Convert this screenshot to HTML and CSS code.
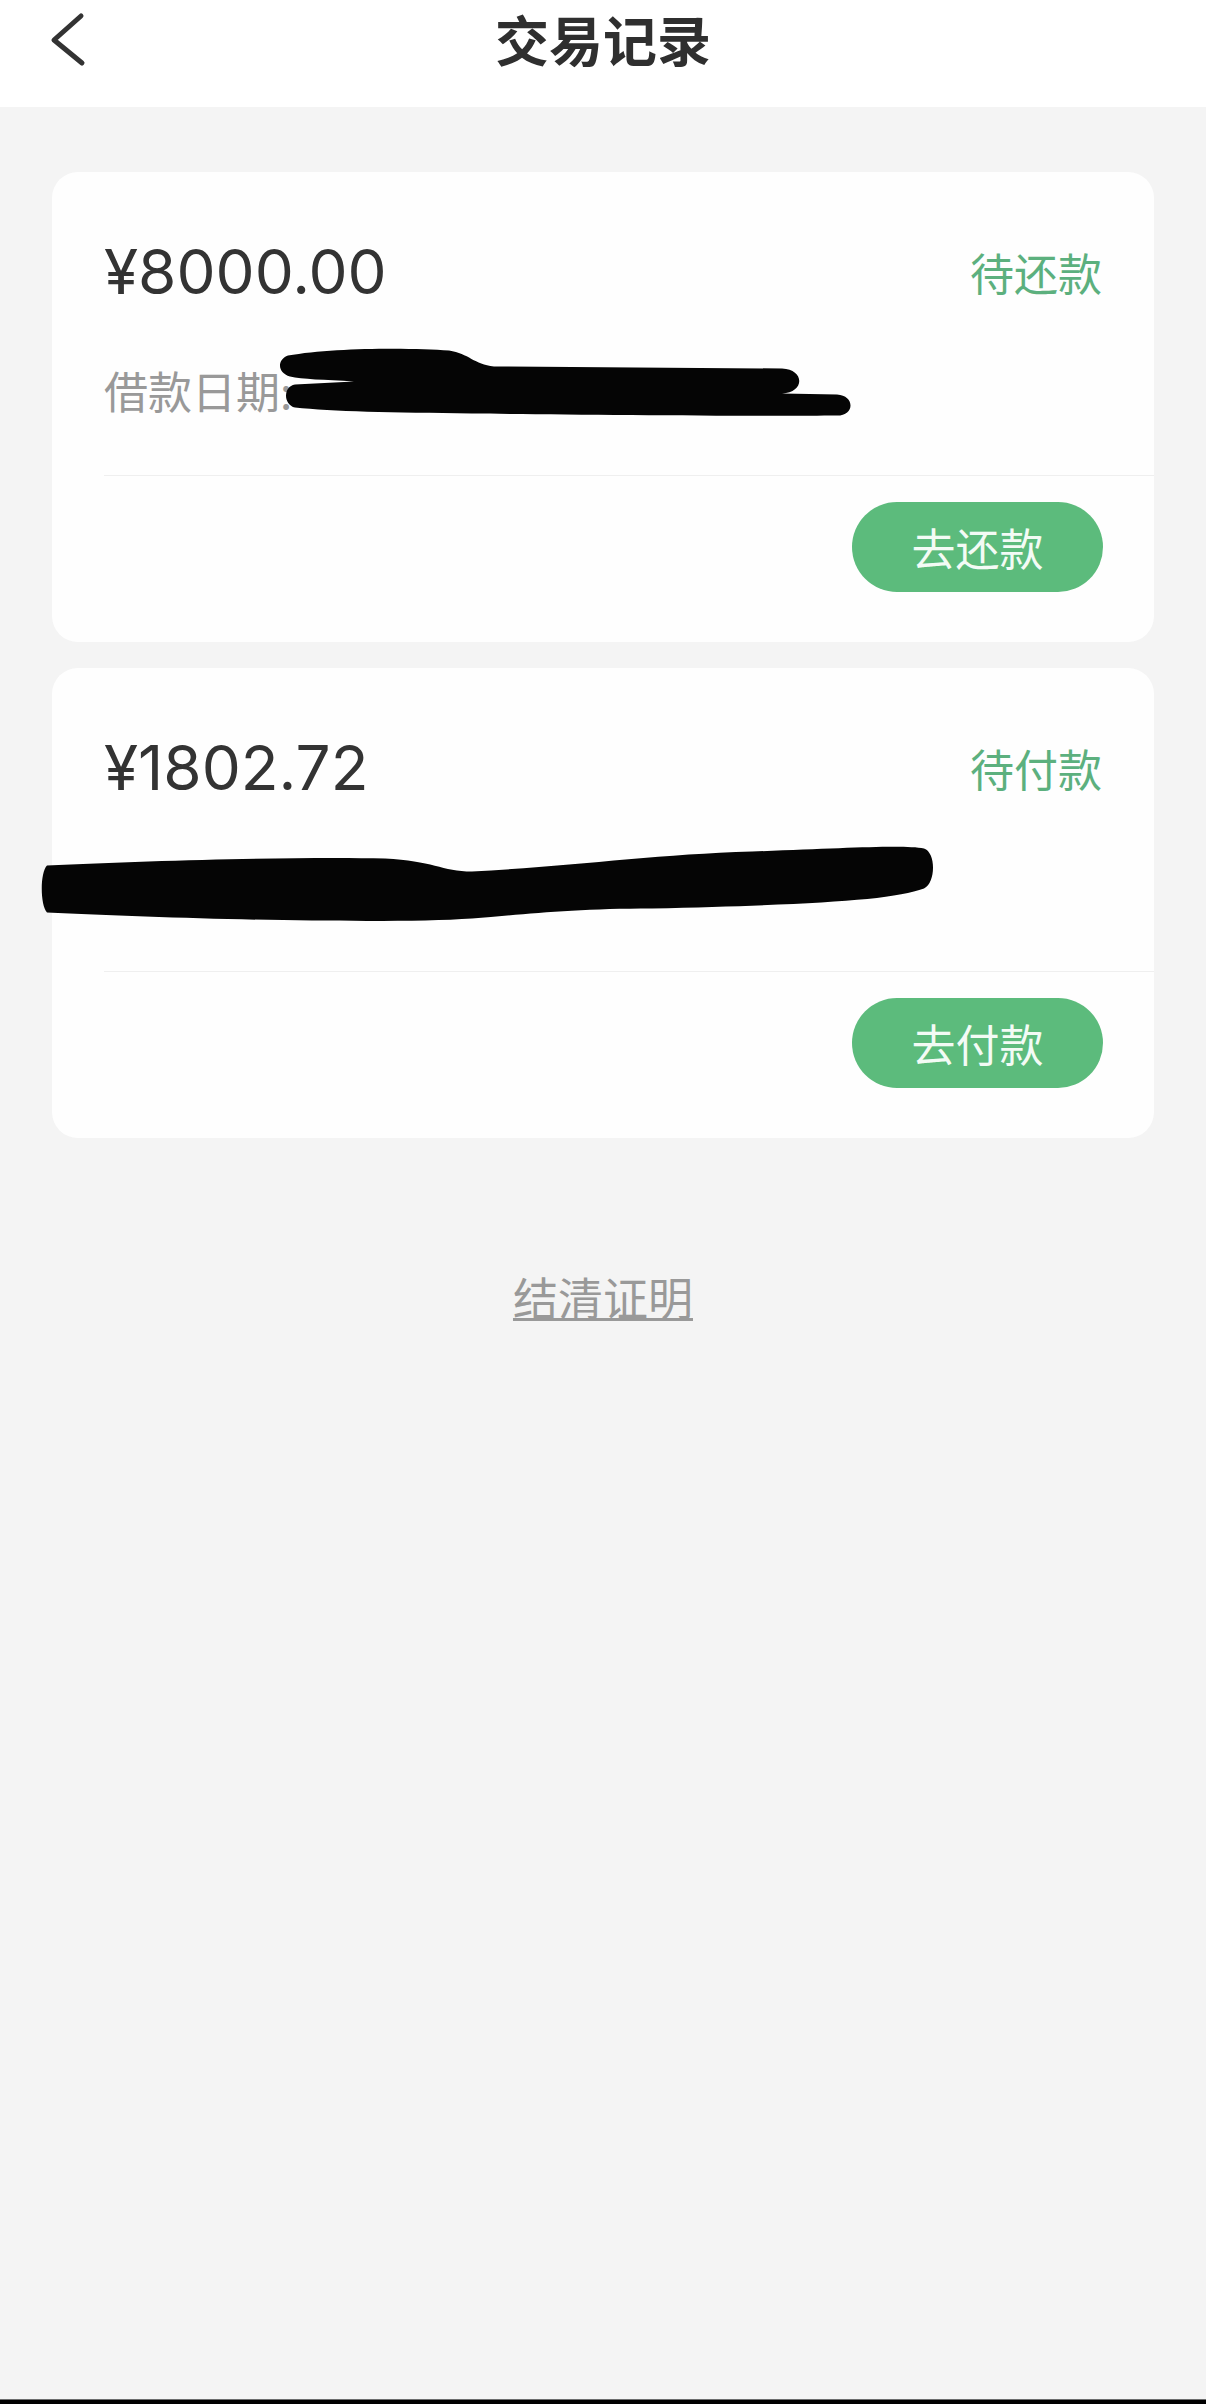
FILE: index.html
```html
<!DOCTYPE html>
<html lang="zh-CN">
<head>
    <meta charset="UTF-8">
    <meta name="viewport" content="width=device-width, initial-scale=1.0">
    <title>交易记录</title>
    <link rel="stylesheet" href="styles.css">
</head>
<body>
    <header class="nav">
        <a class="nav-back" href="#">
            <svg width="40" height="56" viewBox="0 0 40 56">
                <polyline points="33,5 6,29 34,52" fill="none" stroke="#333" stroke-width="5" stroke-linecap="round" stroke-linejoin="round"/>
            </svg>
        </a>
        <h1 class="nav-title">交易记录</h1>
        <span></span>
    </header>

    <main class="records">
        <section class="record-card">
            <div class="record-main">
                <div class="record-head">
                    <span class="record-amount">¥8000.00</span>
                    <span class="record-status">待还款</span>
                </div>
                <div class="record-meta">借款日期:</div>
            </div>
            <div class="record-foot">
                <button class="record-btn">去还款</button>
            </div>
            <!-- hand-drawn redaction over the date -->
            <svg class="redact" viewBox="0 0 1102 469">
                <path d="M236,183 C280,175 360,175 397,178 C417,181 422,192 442,194 L730,196 C753,197 753,220 730,221 L785,222 C803,223 803,243 785,243 C700,244 500,242 420,241 C340,240 280,239 243,235 C231,232 231,214 243,212 L302,209 C272,207 250,207 238,204 C225,200 225,187 236,183 Z"/>
            </svg>
        </section>

        <section class="record-card">
            <div class="record-main">
                <div class="record-head">
                    <span class="record-amount">¥1802.72</span>
                    <span class="record-status">待付款</span>
                </div>
                <div class="record-meta"></div>
            </div>
            <div class="record-foot">
                <button class="record-btn">去付款</button>
            </div>
            <svg class="redact" viewBox="0 0 1102 469">
                <path d="M-5,197 C100,192 250,188 333,190 C380,192 390,203 420,203 C520,198 600,186 700,183 C790,180 850,176 872,180 C884,184 884,214 872,220 C840,232 760,236 600,240 C520,240 470,246 420,250 C330,256 120,250 -5,244 C-12,236 -12,204 -5,197 Z"/>
            </svg>
        </section>

        <a class="settle-link" href="#">结清证明</a>
    </main>

    <div class="home-bar"></div>
</body>
</html>
```

FILE: styles.css
```css
body {
    margin: 0;
    min-height: 100vh;
    display: flex;
    flex-direction: column;
    background-color: #f4f4f4;
    color: #333;
    font-family: "Noto Sans CJK SC", "Noto Sans", sans-serif;
}

.nav {
    display: grid;
    grid-template-columns: 1fr auto 1fr;
    align-items: center;
    height: 78px;
    padding-bottom: 29px;
    background-color: #fff;
}

.nav-back {
    display: flex;
    padding-left: 48px;
}

.nav-title {
    margin: 0;
    font-size: 54px;
    font-weight: 700;
    line-height: 78px;
    color: #2f2f2f;
}

.records {
    flex: 1;
    display: flex;
    flex-direction: column;
    padding: 65px 52px 0;
}

.record-card {
    position: relative;
    background-color: #fefefe;
    border-radius: 26px;
    margin-bottom: 26px;
}

.record-main {
    padding: 60px 52px 55px;
}

.record-head {
    height: 80px;
    display: flex;
    justify-content: space-between;
    align-items: center;
}

.record-amount {
    font-family: Inter, Roboto, "Liberation Sans", sans-serif;
    font-size: 62px;
    line-height: 1;
    color: #333;
}

.record-status {
    font-size: 44px;
    line-height: 1;
    color: #5cb07e;
}

.record-meta {
    margin-top: 48px;
    height: 60px;
    display: flex;
    align-items: center;
    font-size: 44px;
    color: #999;
}

.record-foot {
    display: flex;
    justify-content: flex-end;
    margin-left: 52px;
    padding: 26px 51px 50px 0;
    border-top: 1px solid #efefef;
}

.record-btn {
    width: 251px;
    height: 90px;
    border: none;
    border-radius: 45px;
    background-color: #5cbb7c;
    color: #f3fbf5;
    font-family: inherit;
    font-size: 44px;
    padding: 0;
}

.redact {
    position: absolute;
    top: 0;
    left: 0;
    width: 100%;
    height: 100%;
    overflow: visible;
    pointer-events: none;
    fill: #050505;
}

.settle-link {
    align-self: center;
    margin-top: 103px;
    font-size: 45px;
    line-height: 60px;
    color: #999;
    text-decoration: underline;
    text-decoration-thickness: 3px;
}

.home-bar {
    height: 4px;
    background-color: #000;
    border-top: 1px solid #6d6d6d;
}
```
